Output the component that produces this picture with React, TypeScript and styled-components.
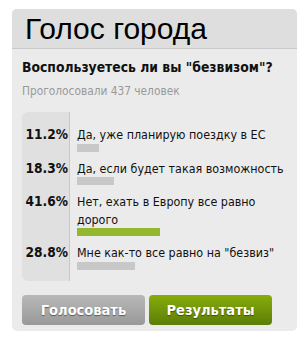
import React from "react";
import styled, { createGlobalStyle } from "styled-components";

const Global = createGlobalStyle`
  html, body { margin: 0; padding: 0; background: #ffffff; }
  body { font-family: "DejaVu Sans Condensed", "DejaVu Sans", sans-serif; }
`;

const Page = styled.div`
  padding: 9px 9px 8px 12px;
  width: 306px;
  box-sizing: border-box;
`;

const Card = styled.div`
  width: 285px;
  background: #ebebeb;
  border-radius: 5px;
  overflow: hidden;
  padding-bottom: 6px;
`;

const Header = styled.div`
  height: 40px;
  background: #dedede;
  border-bottom: 1px solid #c9c9c9;
  box-sizing: border-box;
  padding-left: 13px;
  font-family: "Liberation Sans", Arial, sans-serif;
  font-size: 30px;
  line-height: 40px;
  color: #000;
`;

const Body = styled.div`
  padding: 10px 4px 0 10px;
`;

const Question = styled.div`
  font-weight: bold;
  font-size: 13.8px;
  line-height: 17px;
  color: #111;
`;

const Votes = styled.div`
  margin-top: 8px;
  font-size: 11.8px;
  line-height: 14px;
  color: #999;
`;

const Results = styled.div`
  margin-top: 14px;
  position: relative;
  padding: 14px 0 3px 0;
  display: flex;
  flex-direction: column;
  &::before {
    content: "";
    position: absolute;
    left: 0;
    top: 0;
    bottom: 0;
    width: 47px;
    background: #e0e0e0;
    border-right: 1px solid #c8c8c8;
    border-radius: 6px 0 0 6px;
  }
`;

const Row = styled.div`
  position: relative;
  display: flex;
  align-items: flex-start;
  margin-bottom: 8px;
`;

const Pct = styled.div`
  width: 46px;
  flex: none;
  text-align: right;
  font-weight: bold;
  font-size: 13.6px;
  line-height: 17px;
  color: #111;
`;

const Info = styled.div`
  margin-left: 9px;
  flex: 1;
  padding-right: 8px;
`;

const Label = styled.div`
  font-size: 12.4px;
  line-height: 17.5px;
  color: #111;
`;

const Bar = styled.div<{ $lead?: boolean }>`
  height: 8px;
  background: ${(p) => (p.$lead ? "#93b82e" : "#c8c8c8")};
`;

const Buttons = styled.div`
  display: flex;
  gap: 4px;
  margin-top: 14px;
`;

const Button = styled.div<{ $green?: boolean }>`
  width: 123px;
  height: 30px;
  border-radius: 4px;
  display: flex;
  align-items: center;
  justify-content: center;
  font-family: "DejaVu Sans Condensed", "DejaVu Sans", sans-serif;
  font-weight: bold;
  font-size: 14.5px;
  color: #fff;
  text-shadow: 0 1px 1px rgba(0, 0, 0, 0.45);
  background: ${(p) =>
    p.$green
      ? "linear-gradient(#87ad0a, #5c7d08)"
      : "linear-gradient(#b8b8b8, #999999)"};
`;

const data = [
  { pct: 11.2, label: "Да, уже планирую поездку в ЕС" },
  { pct: 18.3, label: "Да, если будет такая возможность" },
  { pct: 41.6, label: "Нет, ехать в Европу все равно дорого", lead: true },
  { pct: 28.8, label: 'Мне как-то все равно на "безвиз"' },
];

export default function App() {
  return (
    <Page>
      <Global />
      <Card>
        <Header>Голос города</Header>
        <Body>
          <Question>Воспользуетесь ли вы "безвизом"?</Question>
          <Votes>Проголосовали 437 человек</Votes>
          <Results>
            {data.map((d) => (
              <Row key={d.label}>
                <Pct>{d.pct.toFixed(1)}%</Pct>
                <Info>
                  <Label>{d.label}</Label>
                  <Bar $lead={d.lead} style={{ width: `${Math.round(d.pct * 2)}px` }} />
                </Info>
              </Row>
            ))}
          </Results>
          <Buttons>
            <Button>Голосовать</Button>
            <Button $green>Результаты</Button>
          </Buttons>
        </Body>
      </Card>
    </Page>
  );
}
